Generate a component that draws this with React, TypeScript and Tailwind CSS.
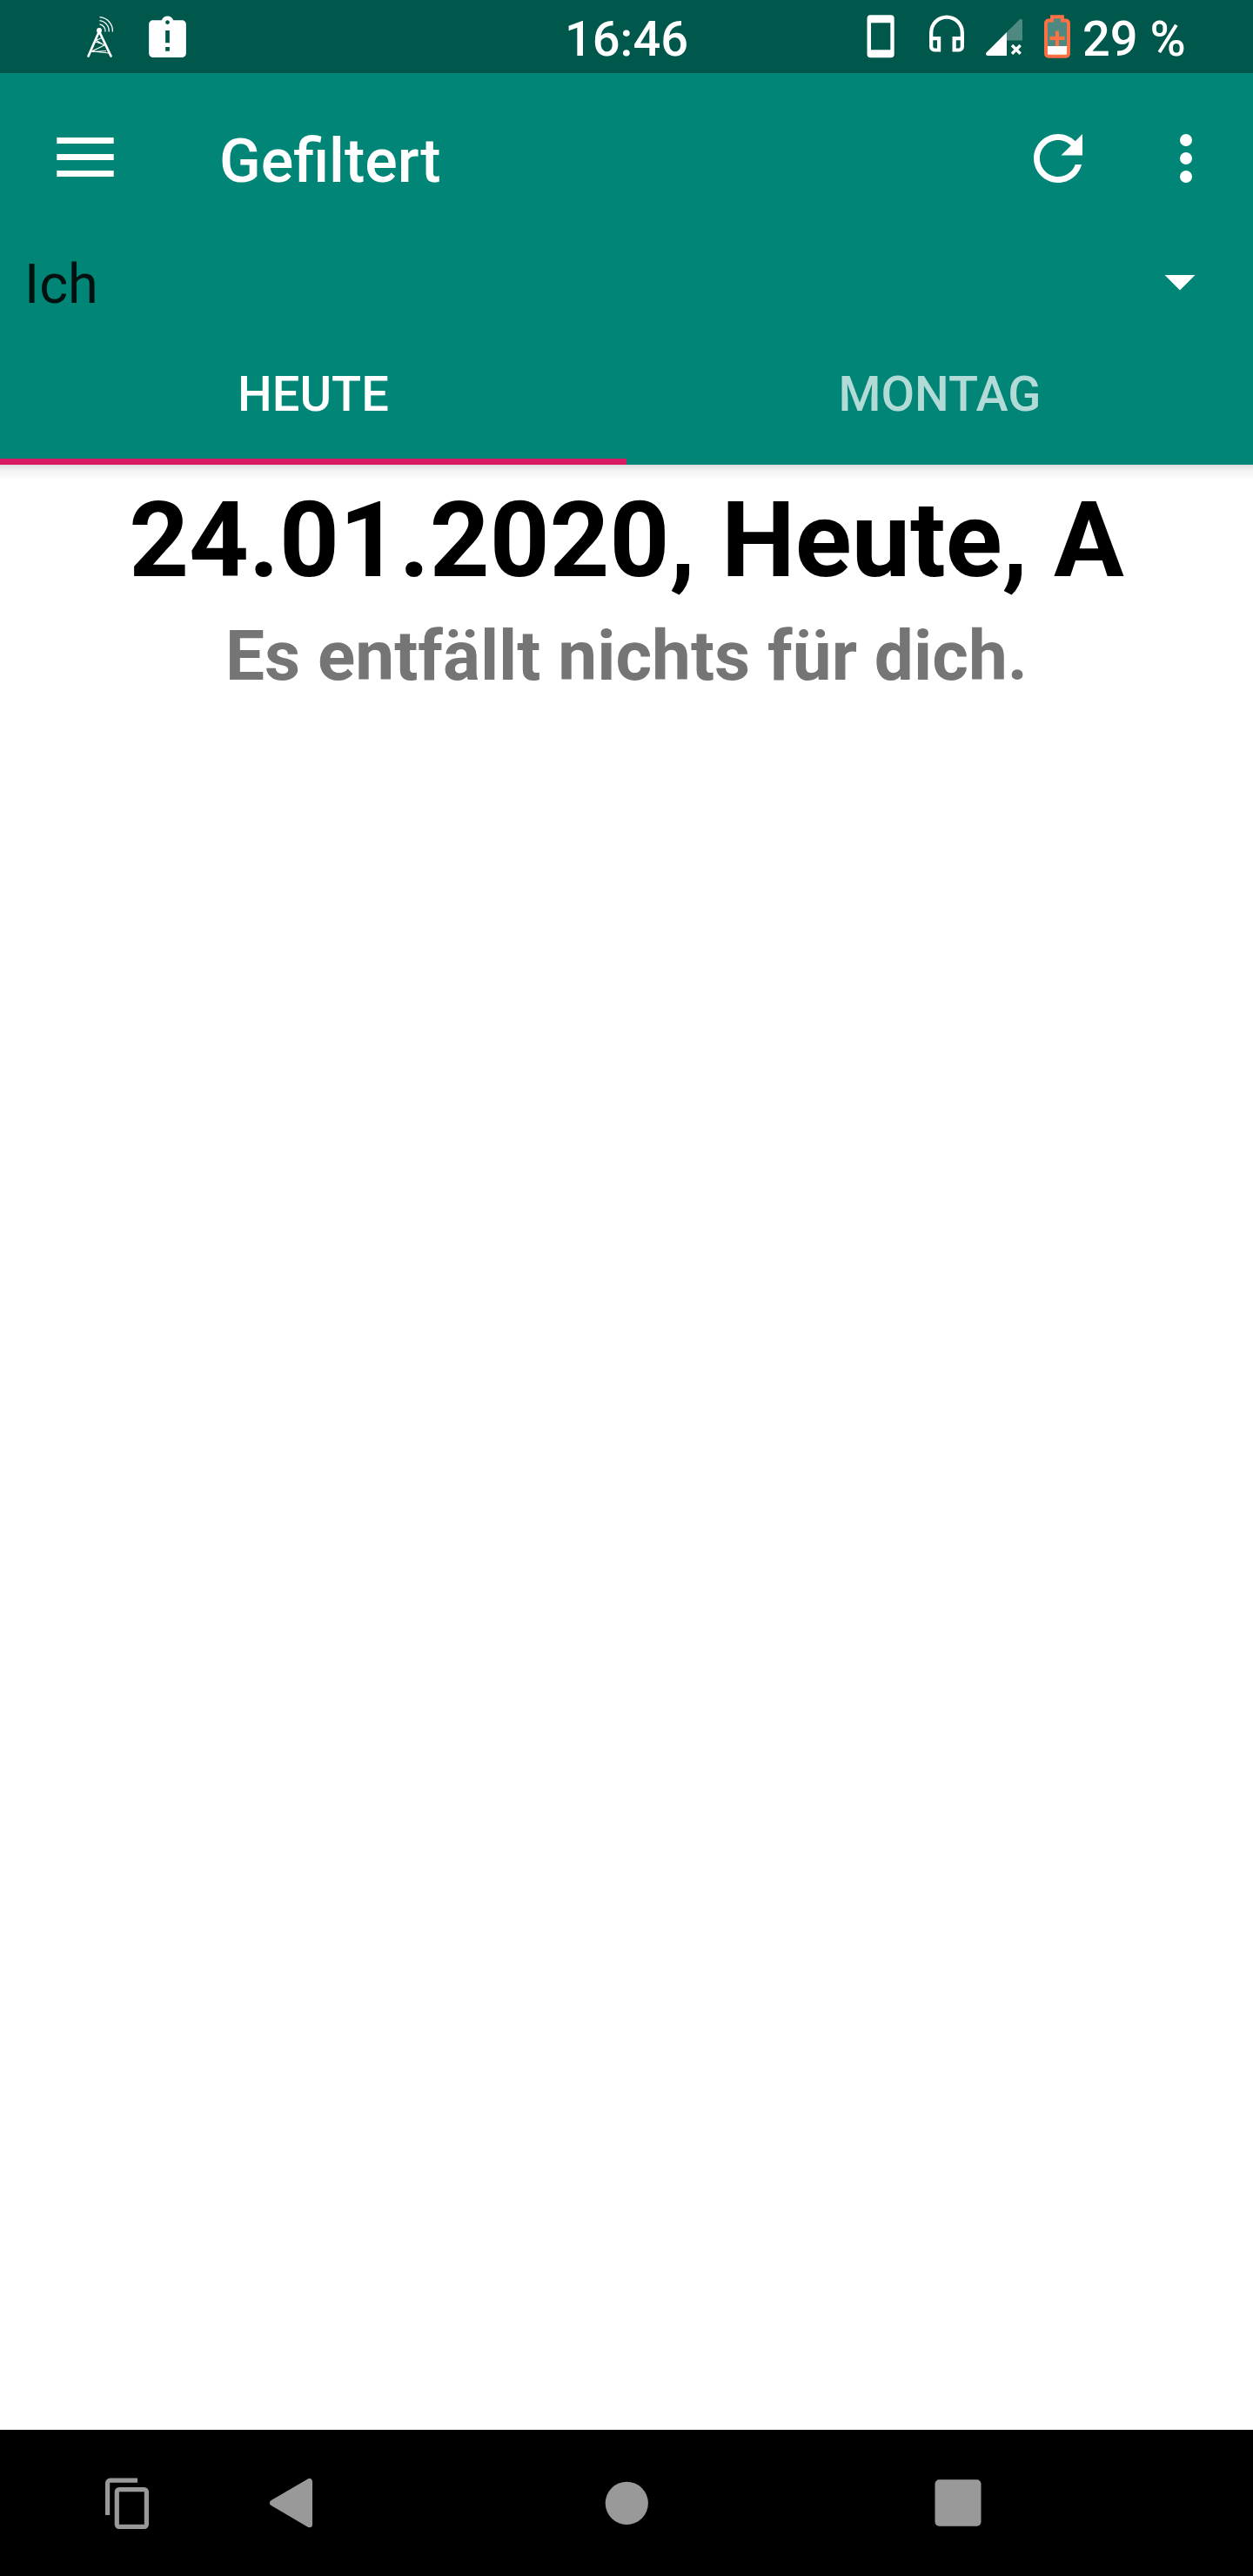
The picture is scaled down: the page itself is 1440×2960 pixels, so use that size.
const ICON = 'block shrink-0';

function StatusBar() {
  return (
    <div className="grid h-[84px] grid-cols-[1fr_auto_1fr] bg-[#00574b] text-white">
      <div className="flex pl-[96px]">
        <svg className={ICON} width="40" height="84" viewBox="96 0 40 84" fill="none" stroke="#fff">
          <path d="M114 36L101.5 64.5M114 36L127.5 64.5" strokeWidth="2.7" strokeLinecap="round" />
          <path d="M110 46.5L117 43.500M110 46L120 52L105.500 59L125.500 61M109.500 48L117.500 50.5M105.500 59.500L122 58.500" strokeWidth="1.1" />
          <circle cx="114" cy="35" r="3" fill="#fff" stroke="none" />
          <path d="M114.500 27.800A7.700 7.700 0 0 1 121 36.500M114.500 23.700A12 12 0 0 1 125.200 36.500M114.500 19.600A16 16 0 0 1 129.400 36.500" strokeWidth="1.300" />
        </svg>
        <svg className="mt-[16px] ml-[28px] block shrink-0" width="57" height="57" viewBox="0 0 24 24" fill="#fff">
          <path d="M19 3h-4.180C14.400 1.840 13.300 1 12 1c-1.300 0-2.400.84-2.820 2H5c-1.100 0-2 .9-2 2v14c0 1.100.9 2 2 2h14c1.100 0 2-.9 2-2V5c0-1.100-.9-2-2-2zm-6 15h-2v-2h2v2zm0-4h-2V8h2v6zm-1-9c-.55 0-1-.45-1-1s.45-1 1-1 1 .45 1 1-.45 1-1 1z" />
        </svg>
      </div>
      <span className="pt-[17px] text-[56px] leading-none font-medium">16:46</span>
      <div className="flex justify-end pr-[76px]">
        <svg className={ICON} width="40" height="84" viewBox="992 0 40 84" fill="#fff">
          <path
            fillRule="evenodd"
            d="M1000.500 17.300h23.200a4 4 0 0 1 4 4v41a4 4 0 0 1-4 4h-23.200a4 4 0 0 1-4-4v-41a4 4 0 0 1 4-4zM1001 26.200v31h22.300v-31z"
          />
        </svg>
        <svg className="ml-[32px] block shrink-0" width="48" height="84" viewBox="1064 0 48 84" fill="#fff">
          <path
            fillRule="evenodd"
            d="M1088 17.400A20 20 0 0 1 1108 37.400V53.600A6 6 0 0 1 1102 59.600H1094.500V42H1103.700V37.400A15.700 15.700 0 0 0 1072.300 37.400V42H1081.200V59.600H1074A6 6 0 0 1 1068 53.600V37.400A20 20 0 0 1 1088 17.400zM1072.300 46.200V53.500A2 2 0 0 0 1074.300 55.500H1077V46.200zM1098.800 46.200V55.500H1101.700A2 2 0 0 0 1103.700 53.500V46.200z"
          />
        </svg>
        <svg className="ml-[18px] block shrink-0" width="48" height="84" viewBox="1130 0 48 84" fill="#fff">
          <path opacity=".3" d="M1157 37L1171.600 22.600Q1175 20.500 1175 24V46.500H1157z" />
          <path d="M1157 37V64H1135Q1132 63 1133.500 60.500z" />
          <path d="M1163 52L1172.700 61.700M1172.700 52L1163 61.700" stroke="#fff" strokeWidth="3.400" />
        </svg>
        <svg className="ml-[18px] block shrink-0" width="38" height="84" viewBox="1196 0 38 84">
          <path d="M1209 19.200H1221V23.500H1225A3 3 0 0 1 1228 26.500V61.700A3 3 0 0 1 1225 64.700H1205A3 3 0 0 1 1202 61.700V26.500A3 3 0 0 1 1205 23.500H1209z" fill="#4d8981" />
          <path d="M1203 53H1227V63.500H1203z" fill="#fff" />
          <path d="M1206.500 41.700H1213V35.500H1217V41.700H1223.600V46H1217V53H1213V46H1206.500z" fill="#ff7043" />
          <path d="M1209 19.200H1221V23.500H1225A3 3 0 0 1 1228 26.500V61.700A3 3 0 0 1 1225 64.700H1205A3 3 0 0 1 1202 61.700V26.500A3 3 0 0 1 1205 23.500H1209z" fill="none" stroke="#ff7043" strokeWidth="3.900" />
        </svg>
        <span className="ml-[10px] w-[120px] pt-[17px] text-[56px] leading-none font-medium whitespace-nowrap">29 %</span>
      </div>
    </div>
  );
}

function Header() {
  return (
    <header className="relative h-[450px] bg-[#008577]">
      <div className="flex h-[196px]">
        <svg className={ICON} width="196" height="196" viewBox="0 84 196 196" fill="#fff">
          <path d="M65.300 158h65.400v7H65.300zM65.300 177h65.400v7H65.300zM65.300 196h65.400v7H65.300z" />
        </svg>
        <h1 className="ml-[56px] pt-[66px] text-[70px] leading-none font-medium text-white">Gefiltert</h1>
        <div className="ml-auto flex gap-[63px] pt-[56px] pr-[35px]">
          <svg className={ICON} width="84" height="84" viewBox="0 0 24 24" fill="#fff">
            <path d="M17.650 6.350C16.200 4.900 14.210 4 12 4c-4.420 0-7.990 3.580-7.990 8s3.570 8 7.990 8c3.730 0 6.840-2.550 7.730-6h-2.080c-.82 2.330-3.040 4-5.650 4-3.310 0-6-2.690-6-6s2.690-6 6-6c1.660 0 3.140.69 4.220 1.780L13 11h7V4l-2.350 2.350z" />
          </svg>
          <svg className={ICON} width="84" height="84" viewBox="0 0 24 24" fill="#fff">
            <circle cx="12" cy="6" r="2" />
            <circle cx="12" cy="12" r="2" />
            <circle cx="12" cy="18" r="2" />
          </svg>
        </div>
      </div>
      <div className="flex h-[90px] items-start justify-between pr-[42px] pl-[28px]">
        <span className="pt-[15px] text-[63px] leading-none text-[#00110f]">Ich</span>
        <svg className="mt-px block shrink-0" width="84" height="84" viewBox="0 0 24 24" fill="#fff">
          <path d="M7 10l5 5 5-5z" />
        </svg>
      </div>
      <nav className="grid h-[164px] grid-cols-2 text-center text-[56px] leading-none font-medium">
        <div className="border-b-[7px] border-[#d81b60] pt-[55px] text-white">HEUTE</div>
        <div className="pt-[55px] text-[#b2dad6]">MONTAG</div>
      </nav>
      <div className="absolute inset-x-0 top-full h-[18px] bg-linear-to-b from-[#dedede] via-[#f3f3f3] via-40% to-white" />
    </header>
  );
}

function NavigationBar() {
  return (
    <footer className="flex h-[168px] bg-black">
      <svg className="ml-[116px] block shrink-0" width="60" height="168" viewBox="116 2792 60 168" fill="none" stroke="#999" strokeWidth="5.200">
        <path d="M158 2850.100H126.600A3 3 0 0 0 123.600 2853.100V2890" />
        <rect x="134.300" y="2860.700" width="34.100" height="42.600" rx="2.600" />
      </svg>
      <svg className="ml-[129px] block shrink-0" width="60" height="168" viewBox="305 2792 60 168" fill="#999" stroke="#999" strokeWidth="7" strokeLinejoin="round">
        <path d="M355.500 2851.500V2900.700L313.500 2876.100z" />
      </svg>
      <svg className="ml-[325px] block shrink-0" width="60" height="168" viewBox="690 2792 60 168" fill="#999">
        <circle cx="720.300" cy="2876.300" r="24.600" />
      </svg>
      <svg className="ml-[320px] block shrink-0" width="60" height="168" viewBox="1070 2792 60 168" fill="#999">
        <rect x="1074.500" y="2849.300" width="53" height="53.400" rx="5" />
      </svg>
    </footer>
  );
}

export default function App() {
  return (
    <div className="flex h-[2960px] w-[1440px] flex-col overflow-hidden bg-white font-['Roboto',sans-serif]">
      <StatusBar />
      <Header />
      <main className="flex-1 pt-[16px] text-center font-bold">
        <h2 className="text-[120.2px] leading-[141px] text-black">24.01.2020, Heute, A</h2>
        <p className="mt-[16px] text-[80.1px] leading-[94px] text-[#757575]">Es entfällt nichts für dich.</p>
      </main>
      <NavigationBar />
    </div>
  );
}
